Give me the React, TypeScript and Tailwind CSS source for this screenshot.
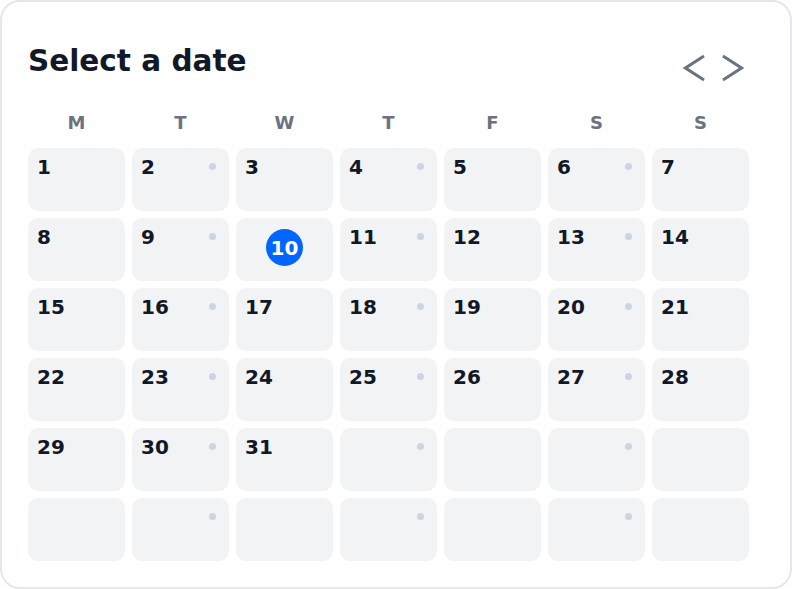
import React from "react";

const weekdays = ["M", "T", "W", "T", "F", "S", "S"];

export default function App() {
  const cells: (number | null)[] = [];
  for (let i = 1; i <= 31; i++) cells.push(i);
  while (cells.length < 42) cells.push(null);

  return (
    <div
      className="w-[792px] h-[589px] bg-white border-2 border-[#e5e7eb] rounded-[20px] box-border pl-[26px] pt-[42px]"
      style={{ fontFamily: "'DejaVu Sans', sans-serif" }}
    >
      <div className="w-[721px]">
        <div className="flex justify-between items-start h-[68px]">
          <h1 className="text-[29.5px] font-bold text-[#111827] leading-[34px] m-0">Select a date</h1>
          <div className="flex gap-[17px] mt-[10px] mr-[5px]">
            <svg width="22" height="28" viewBox="0 0 22 28" fill="none">
              <polyline points="21,2 2.5,14 21,26" stroke="#6b7280" strokeWidth="3" strokeLinejoin="miter" />
            </svg>
            <svg width="22" height="28" viewBox="0 0 22 28" fill="none">
              <polyline points="1,2 19.5,14 1,26" stroke="#6b7280" strokeWidth="3" strokeLinejoin="miter" />
            </svg>
          </div>
        </div>
        <div className="grid grid-cols-7 gap-x-[7px] h-[36px]">
          {weekdays.map((d, i) => (
            <div key={i} className="text-center text-[18px] font-bold text-[#6b7280] leading-[21px]">
              {d}
            </div>
          ))}
        </div>
        <div className="grid grid-cols-7 gap-[7px]">
          {cells.map((n, i) => {
            const col = i % 7;
            const dot = col === 1 || col === 3 || col === 5;
            const selected = n === 10;
            return (
              <div key={i} className="relative h-[63px] bg-[#f2f3f5] rounded-[10px]">
                {selected ? (
                  <div className="flex h-full items-center justify-center">
                    <div className="w-[37px] h-[37px] mb-[4px] rounded-full bg-[#0066ff] text-white text-[20px] font-bold leading-none flex items-center justify-center">
                      10
                    </div>
                  </div>
                ) : (
                  n !== null && (
                    <div className="pl-[9px] pt-[8px] text-[20px] font-bold text-[#111827] leading-[23px]">{n}</div>
                  )
                )}
                {dot && !selected && (
                  <div className="absolute top-[15px] right-[13px] w-[7px] h-[7px] rounded-full bg-[#cbd5e1]" />
                )}
              </div>
            );
          })}
        </div>
      </div>
    </div>
  );
}
